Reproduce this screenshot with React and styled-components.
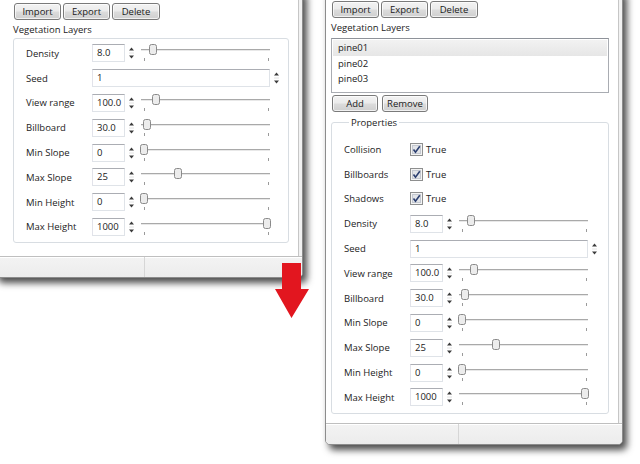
import React from "react";
import styled, { createGlobalStyle } from "styled-components";

const GlobalStyle = createGlobalStyle`
  html, body {
    margin: 0;
    padding: 0;
    background: #fff;
  }
  body {
    font-family: "Open Sans", "Liberation Sans", sans-serif;
    font-size: 9.5px;
    color: #222;
    overflow: hidden;
  }
`;

const Canvas = styled.div`
  position: relative;
  width: 640px;
  height: 464px;
  overflow: hidden;
  background: #fff;
`;

const Window = styled.div`
  position: absolute;
  left: ${(p) => p.$left}px;
  top: ${(p) => p.$top}px;
  width: ${(p) => p.$width}px;
  height: ${(p) => p.$height}px;
  box-sizing: border-box;
  border: 1px solid #8c8c8c;
  border-radius: 0 0 5px 5px;
  background: #f2f2f2;
  box-shadow: 4px 5px 7px rgba(0, 0, 0, 0.7);
  display: flex;
  flex-direction: column;
  overflow: hidden;
`;

const Body = styled.div`
  flex: 1;
  display: flex;
  flex-direction: column;
  background: #fff;
  margin-right: 3px;
  border-right: 1px solid #c6c6c6;
  padding: ${(p) => p.$padTop}px 9px 0 ${(p) => p.$padLeft}px;
`;

const ButtonRow = styled.div`
  display: flex;
  gap: ${(p) => p.$gap || 2}px;
  margin-top: ${(p) => p.$mt || 0}px;
  padding-left: 1px;
`;

const Button = styled.div`
  width: ${(p) => p.$w || 47}px;
  height: 17px;
  box-sizing: border-box;
  border: 1px solid #7a7a7a;
  border-radius: 3px;
  background: linear-gradient(#f3f3f3 0%, #ebebeb 48%, #dcdcdc 52%, #cfcfcf 100%);
  box-shadow: inset 0 0 0 1px rgba(255, 255, 255, 0.7);
  display: flex;
  align-items: center;
  justify-content: center;
  line-height: 15px;
  color: #1a1a1a;
`;

const SectionLabel = styled.div`
  height: 14px;
  line-height: 14px;
  margin-top: ${(p) => p.$mt}px;
`;

const ListBox = styled.div`
  margin-top: 3px;
  height: 55px;
  box-sizing: border-box;
  border: 1px solid #a9acb2;
  border-top-color: #8e9299;
  padding: 1px 1px 0;
  background: #fff;
`;

const ListItem = styled.div`
  height: 15.5px;
  line-height: 15.5px;
  padding-left: 5px;
  background: ${(p) => (p.$selected ? "linear-gradient(#f2f2f2, #e6e6e6)" : "transparent")};
`;

const Group = styled.div`
  margin-top: ${(p) => p.$mt}px;
  border: 1px solid #d8dde2;
  border-radius: 3px;
  padding: ${(p) => p.$pt}px 0 3px 12px;
`;

const FieldGroup = styled.fieldset`
  margin: 4px 0 0;
  border: 1px solid #d8dde2;
  border-radius: 3px;
  padding: 8px 0 3px 12px;
  min-width: 0;
`;

const Legend = styled.legend`
  margin-left: 5px;
  padding: 0 2px;
  line-height: 13px;
`;

const Row = styled.div`
  display: grid;
  grid-template-columns: 66px 1fr;
  align-items: center;
  height: 24.8px;
`;

const RowLabel = styled.div`
  white-space: nowrap;
`;

const Control = styled.div`
  display: flex;
  align-items: center;
`;

const Input = styled.div`
  width: ${(p) => p.$w}px;
  height: 18px;
  box-sizing: border-box;
  border: 1px solid #dfe3e8;
  border-top-color: #abadb3;
  border-left-color: #e2e3ea;
  padding-left: 4px;
  line-height: 16px;
  background: #fff;
`;

const Spinner = styled.svg`
  display: block;
  margin-left: ${(p) => p.$ml}px;
  flex: none;
`;

const SliderSvg = styled.svg`
  display: block;
  margin-left: 2px;
  flex: none;
`;

const CheckText = styled.span`
  margin-left: 3px;
`;

const StatusBar = styled.div`
  height: 20px;
  flex: none;
  border-top: 1px solid #bfbfbf;
  box-shadow: inset 0 1px 0 #fff;
  background: linear-gradient(#f3f3f3, #ececec);
  display: flex;
`;

const StatusCell = styled.div`
  width: ${(p) => p.$w}px;
  border-right: 1px solid #d6d6d6;
`;

const Arrow = styled.svg`
  position: absolute;
  left: 274px;
  top: 262px;
  z-index: 5;
`;

const SpinArrows = ({ ml = 3 }) => (
  <Spinner $ml={ml} width="7" height="18" viewBox="0 0 7 18">
    <polygon points="1,6.5 3.5,3.5 6,6.5" fill="#3c3c3c" />
    <line x1="1" y1="9" x2="6" y2="9" stroke="#e4e4e4" strokeWidth="1" />
    <polygon points="1,11.5 3.5,14.5 6,11.5" fill="#3c3c3c" />
  </Spinner>
);

const Slider = ({ pos }) => (
  <SliderSvg width="134" height="20" viewBox="0 0 134 20">
    <line x1="4" y1="6.5" x2="133" y2="6.5" stroke="#a9a9a9" strokeWidth="1" />
    <line x1="4" y1="7.5" x2="133" y2="7.5" stroke="#e8e8e8" strokeWidth="1" />
    <line x1="7.5" y1="15" x2="7.5" y2="18" stroke="#9a9a9a" strokeWidth="1" />
    <line x1="131.5" y1="15" x2="131.5" y2="18" stroke="#9a9a9a" strokeWidth="1" />
    <rect
      x={4 + pos - 3.5}
      y="1.5"
      width="7"
      height="10"
      rx="2"
      fill="#ececec"
      stroke="#8a8a8a"
      strokeWidth="1"
    />
  </SliderSvg>
);

const CheckBox = () => (
  <svg width="13" height="13" viewBox="0 0 13 13" style={{ display: "block" }}>
    <rect x="0.5" y="0.5" width="12" height="12" fill="#f4f4f4" stroke="#8e8f8f" />
    <rect x="2.5" y="2.5" width="8" height="8" fill="#e2e4e8" stroke="#c4c8d0" />
    <path d="M3.5 6.5 L5.5 9.2 L9.8 3.2" fill="none" stroke="#2c3f70" strokeWidth="1.6" />
  </svg>
);

const numberRows = [
  { label: "Density", value: "8.0", pos: 12 },
  { label: "Seed", value: "1", wide: true },
  { label: "View range", value: "100.0", pos: 15 },
  { label: "Billboard", value: "30.0", pos: 6 },
  { label: "Min Slope", value: "0", pos: 3 },
  { label: "Max Slope", value: "25", pos: 37 },
  { label: "Min Height", value: "0", pos: 3 },
  { label: "Max Height", value: "1000", pos: 126 },
];

const checkRows = ["Collision", "Billboards", "Shadows"];

function NumberRows() {
  return numberRows.map((r) => (
    <Row key={r.label}>
      <RowLabel>{r.label}</RowLabel>
      <Control>
        {r.wide ? (
          <>
            <Input $w={178}>{r.value}</Input>
            <SpinArrows ml={3} />
          </>
        ) : (
          <>
            <Input $w={33}>{r.value}</Input>
            <SpinArrows ml={3} />
            <Slider pos={r.pos} />
          </>
        )}
      </Control>
    </Row>
  ));
}

function TopButtons() {
  return (
    <ButtonRow>
      <Button>Import</Button>
      <Button>Export</Button>
      <Button $w={48}>Delete</Button>
    </ButtonRow>
  );
}

function BeforeWindow() {
  return (
    <Window $left={-6} $top={-10} $width={309} $height={288}>
      <Body $padTop={12} $padLeft={18}>
        <TopButtons />
        <SectionLabel $mt={3}>Vegetation Layers</SectionLabel>
        <Group $mt={1} $pt={2}>
          <NumberRows />
        </Group>
      </Body>
      <StatusBar>
        <StatusCell $w={149} />
      </StatusBar>
    </Window>
  );
}

function AfterWindow() {
  return (
    <Window $left={325} $top={-10} $width={298} $height={455}>
      <Body $padTop={10} $padLeft={5}>
        <TopButtons />
        <SectionLabel $mt={3}>Vegetation Layers</SectionLabel>
        <ListBox>
          <ListItem $selected>pine01</ListItem>
          <ListItem>pine02</ListItem>
          <ListItem>pine03</ListItem>
        </ListBox>
        <ButtonRow $gap={4} $mt={2}>
          <Button $w={46}>Add</Button>
          <Button $w={46}>Remove</Button>
        </ButtonRow>
        <FieldGroup>
          <Legend>Properties</Legend>
          {checkRows.map((c) => (
            <Row key={c}>
              <RowLabel>{c}</RowLabel>
              <Control>
                <CheckBox />
                <CheckText>True</CheckText>
              </Control>
            </Row>
          ))}
          <NumberRows />
        </FieldGroup>
      </Body>
      <StatusBar>
        <StatusCell $w={132} />
      </StatusBar>
    </Window>
  );
}

export default function App() {
  return (
    <>
      <GlobalStyle />
      <Canvas>
        <BeforeWindow />
        <AfterWindow />
        <Arrow width="36" height="57" viewBox="0 0 36 57">
          <polygon points="8,1 27,1 27,27 35,27 17.5,56 1,27 8,27" fill="#e2161f" />
        </Arrow>
      </Canvas>
    </>
  );
}
